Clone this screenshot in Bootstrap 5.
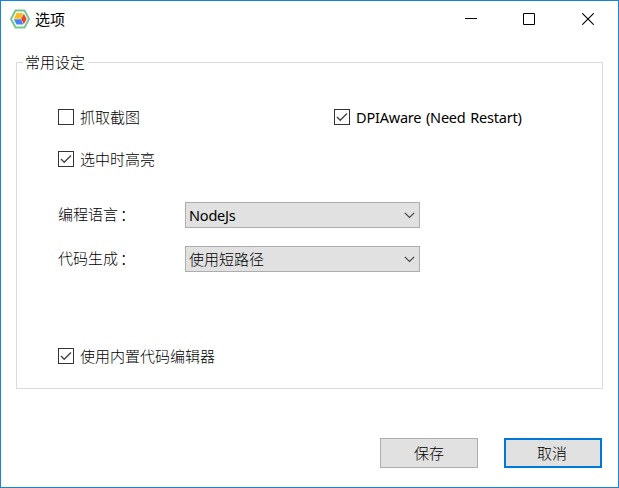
<!DOCTYPE html>
<html lang="zh-CN">
<head>
<meta charset="utf-8">
<title>选项</title>
<link href="https://cdn.jsdelivr.net/npm/bootstrap@5.3.0/dist/css/bootstrap.min.css" rel="stylesheet">
<style>
body{font:300 15px/20px "Noto Sans CJK SC",sans-serif;color:#000;background:#fff;overflow:hidden}
.win{width:619px;height:488px;border:1px solid #1883d7}
.titlebar{height:36px;padding:0 1px 0 9px}
.titlebar .caption{padding-left:5px;font-weight:400}
.winctl{width:58.5px;height:36px}
.group{margin:25px 15px 0;height:327px;border:1px solid #dcdcdc;padding:0 41px}
.group-title{margin:-12px 0 36px -35px;padding:0 2px;background:#fff;width:65px;height:22px;line-height:22px;white-space:nowrap}
.chk-row{height:16px}
.chk{gap:6px;line-height:16px;white-space:nowrap}
.form-check-input.box{width:16px;height:16px;margin:0;border:1px solid #333;border-radius:0;background-color:#fff;float:none;flex:none}
.form-check-input.box:checked{background-color:#fff;border-color:#333;background-size:14px 14px;
background-image:url("data:image/svg+xml,%3Csvg xmlns='http://www.w3.org/2000/svg' viewBox='0 0 14 14'%3E%3Cpath d='M2 7L5.2 10.2L12 3.4' fill='none' stroke='%23444' stroke-width='1.4'/%3E%3C/svg%3E")}
.latin{font-family:"Noto Sans",sans-serif;font-weight:400;font-size:14.5px;letter-spacing:-.2px;word-spacing:1px}
.chk .latin{line-height:17px}
.first-option{width:276px}
.options-top{margin-bottom:26px}
.field-first{margin-top:35px}
.field-second{margin-top:18px}
.editor-option{margin-top:76px}
.field-name{width:127px;margin-top:-3px}
.field-name .colon{margin-left:2px}
.combo{width:235px;height:26px;background:#e1e1e1;border:1px solid #adadad;padding:0 4px 0 3px}
.actions{gap:26px;margin:49px 16px 0}
.cmd{width:98px;height:30px;padding:0;border:1px solid #adadad;border-radius:0;background:#e1e1e1;color:#000;font-size:15px;font-weight:300;line-height:28px}
.cmd.focus-default{border:2px solid #0078d7;line-height:26px;padding-right:2px}
</style>
<script src="https://cdn.jsdelivr.net/npm/bootstrap@5.3.0/dist/js/bootstrap.bundle.min.js"></script>
</head>
<body>
<div class="win d-flex flex-column">
  <header class="titlebar d-flex align-items-center">
    <svg width="20" height="20" viewBox="0 0 20 20"><path d="M5.500 1.500h9L19 10l-4.500 8.500h-9L1 10z" fill="#fff" stroke="#74c88f" stroke-width="2" stroke-linejoin="round"/><path d="M6.500 4h6.500L11 9.800H3.800z" fill="#fbbc1c"/><path d="M3.800 10.200H11l2.200 5.300H6.500z" fill="#4285f4"/><path d="M13.800 4.800L16.700 10l-2.900 5.200L11 10z" fill="#ea4335"/></svg>
    <span class="caption me-auto">选项</span>
    <div class="winctl d-flex align-items-center justify-content-center"><svg width="12" height="12"><path d="M0 5.500h12" stroke="#000"/></svg></div>
    <div class="winctl d-flex align-items-center justify-content-center"><svg width="12" height="12"><path d="M.5.5h11v11h-11z" fill="none" stroke="#000"/></svg></div>
    <div class="winctl d-flex align-items-center justify-content-center"><svg width="12" height="12"><path d="M.3.300l11.400 11.400M11.700.3L.3 11.700" stroke="#000" stroke-width="1.100"/></svg></div>
  </header>
  <section class="group">
    <div class="group-title">常用设定</div>
    <div class="chk-row options-top d-flex">
      <label class="chk d-flex first-option"><input class="form-check-input box" type="checkbox"><span>抓取截图</span></label>
      <label class="chk d-flex"><input class="form-check-input box" type="checkbox" checked><span class="latin">DPIAware (Need Restart)</span></label>
    </div>
    <label class="chk chk-row d-flex"><input class="form-check-input box" type="checkbox" checked><span>选中时高亮</span></label>
    <div class="field-first d-flex align-items-center"><span class="field-name">编程语言<span class="colon">：</span></span>
      <div class="combo d-flex align-items-center justify-content-between"><span class="latin">NodeJs</span><svg width="11" height="7"><path d="M.8.800L5.500 5.500L10.200.8" fill="none" stroke="#444" stroke-width="1.200"/></svg></div></div>
    <div class="field-second d-flex align-items-center"><span class="field-name">代码生成<span class="colon">：</span></span>
      <div class="combo d-flex align-items-center justify-content-between"><span>使用短路径</span><svg width="11" height="7"><path d="M.8.800L5.500 5.500L10.200.8" fill="none" stroke="#444" stroke-width="1.200"/></svg></div></div>
    <label class="chk chk-row editor-option d-flex"><input class="form-check-input box" type="checkbox" checked><span>使用内置代码编辑器</span></label>
  </section>
  <footer class="actions d-flex justify-content-end"><button class="btn cmd">保存</button><button class="btn cmd focus-default">取消</button></footer>
</div>
</body>
</html>
